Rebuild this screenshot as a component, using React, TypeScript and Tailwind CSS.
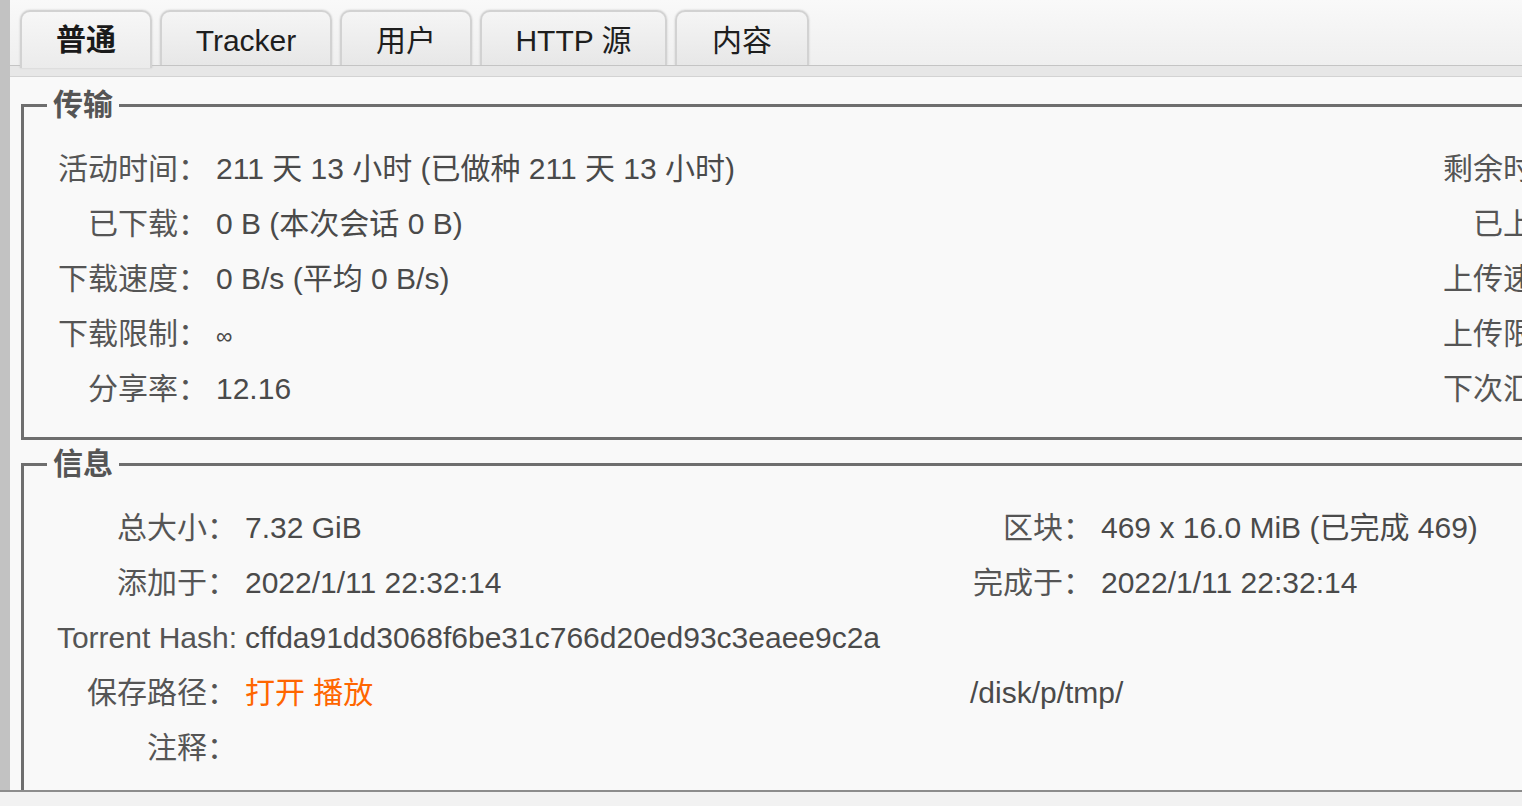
import type { ReactNode } from "react";

type Row = { label: string; value?: ReactNode; label2?: string; value2?: ReactNode; wide?: ReactNode };

const tabs = [
  { name: "普通", w: "w-[132px]" },
  { name: "Tracker", w: "w-[172px]" },
  { name: "用户", w: "w-[132px]" },
  { name: "HTTP 源", w: "w-[187px]" },
  { name: "内容", w: "w-[134px]" },
];

const transfer: Row[] = [
  { label: "活动时间：", value: "211 天 13 小时 (已做种 211 天 13 小时)", label2: "剩余时间：", value2: "∞" },
  { label: "已下载：", value: "0 B (本次会话 0 B)", label2: "已上传：", value2: "89.0 GiB (本次会话 0 B)" },
  { label: "下载速度：", value: "0 B/s (平均 0 B/s)", label2: "上传速度：", value2: "0 B/s (平均 4.9 KiB/s)" },
  { label: "下载限制：", value: <span className="text-[23px]">∞</span>, label2: "上传限制：", value2: "∞" },
  { label: "分享率：", value: "12.16", label2: "下次汇报：", value2: "" },
];

const info: Row[] = [
  { label: "总大小：", value: "7.32 GiB", label2: "区块：", value2: "469 x 16.0 MiB (已完成 469)" },
  { label: "添加于：", value: "2022/1/11 22:32:14", label2: "完成于：", value2: "2022/1/11 22:32:14" },
  { label: "Torrent Hash:", value: "cffda91dd3068f6be31c766d20ed93c3eaee9c2a" },
  {
    label: "保存路径：",
    value: (
      <span className="text-[#ff6600]">
        <a className="cursor-pointer">打开</a> <a className="cursor-pointer">播放</a>
      </span>
    ),
    wide: "/disk/p/tmp/",
  },
  { label: "注释：", value: "" },
];

function Section({
  title,
  rows,
  cols,
  className,
}: {
  title: string;
  rows: Row[];
  cols: string;
  className: string;
}) {
  return (
    <fieldset
      className={`ml-[11px] w-[1800px] shrink-0 border-[3px] border-[#6e6e6e] pl-[23px] pt-[18px] pb-[21px] ${className}`}
    >
      <legend className="px-[6px] text-[30px] font-bold leading-[36px] text-[#555]">{title}</legend>
      {rows.map((r) => (
        <div key={r.label} className={`grid h-[55px] items-center whitespace-nowrap ${cols}`}>
          <div className="text-right text-[#555]">{r.label}</div>
          <div className="pl-[8px] text-[#4a4a4a]">{r.value}</div>
          {r.wide !== undefined ? (
            <div className="col-span-2 pl-[10px] text-[#4a4a4a]">{r.wide}</div>
          ) : (
            <>
              <div className="text-right text-[#555]">{r.label2}</div>
              <div className="pl-[8px] text-[#4a4a4a]">{r.value2}</div>
            </>
          )}
        </div>
      ))}
    </fieldset>
  );
}

export default function App() {
  return (
    <div className="flex h-[806px] w-[1522px] flex-col overflow-hidden bg-[#f9f9f9] font-['Liberation_Sans','Noto_Sans_CJK_SC',sans-serif] text-[30px]">
      <div className="flex min-h-0 flex-1">
        <div className="w-[10px] shrink-0 bg-[#c2c2c2]" />
        <div className="flex min-w-0 flex-1 flex-col overflow-hidden">
          {/* tab strip */}
          <div className="flex h-[66px] shrink-0 items-end gap-[8px] border-b border-[#c4c4c4] bg-gradient-to-b from-[#f9f9f9] to-[#efefef] pl-[10px]">
            {tabs.map((t, i) =>
              i === 0 ? (
                <div
                  key={t.name}
                  className={`relative z-10 -mb-[3px] flex h-[58px] items-center justify-center rounded-t-[10px] border-2 border-b-0 border-[#d2d2d2] bg-gradient-to-b from-[#f7f7f7] to-[#ebebeb] pb-[2px] font-bold text-[#1a1a1a] shadow-[0_0_2px_#c4c4c4] ${t.w}`}
                >
                  {t.name}
                </div>
              ) : (
                <div
                  key={t.name}
                  className={`flex h-[55px] items-center justify-center rounded-t-[10px] border-2 border-b-0 border-[#d2d2d2] bg-gradient-to-b from-[#f5f5f5] to-[#e7e7e7] pt-[4px] text-[#1e1e1e] shadow-[0_0_2px_#c4c4c4] ${t.w}`}
                >
                  {t.name}
                </div>
              ),
            )}
          </div>
          <div className="h-[11px] shrink-0 border-b border-[#d3d3d3] bg-[#e7e7e7]" />

          <Section
            title="传输"
            rows={transfer}
            cols="grid-cols-[161px_1225px_160px_1fr]"
            className="mt-[10px]"
          />
          <Section
            title="信息"
            rows={info}
            cols="grid-cols-[190px_723px_133px_1fr]"
            className="mt-[6px]"
          />
        </div>
      </div>
      <div className="h-[16px] shrink-0 border-t-2 border-[#8c8c8c] bg-[#f2f2f2]" />
    </div>
  );
}
